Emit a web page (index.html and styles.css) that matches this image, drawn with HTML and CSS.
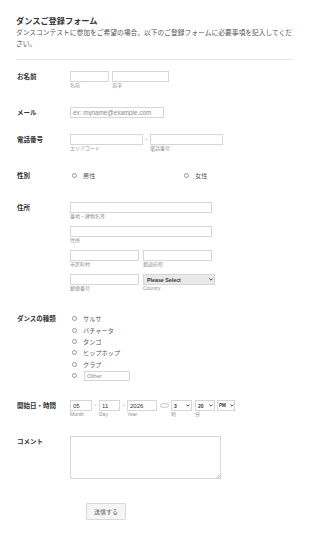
FILE: index.html
```html
<!DOCTYPE html>
<html lang="ja">
<head>
<meta charset="utf-8">
<title>ダンスご登録フォーム</title>
<link rel="stylesheet" href="styles.css">
</head>
<body>
<form class="form">
  <header class="head">
    <h1 class="title">ダンスご登録フォーム</h1>
    <p class="desc">ダンスコンテストに参加をご希望の場合、以下のご登録フォームに必要事項を記入してください。</p>
  </header>

  <div class="row row-name">
    <label class="lbl">お名前</label>
    <div class="field line">
      <div class="col w39"><input class="inp" type="text"><span class="sub">名前</span></div>
      <div class="col w57"><input class="inp" type="text"><span class="sub">苗字</span></div>
    </div>
  </div>

  <div class="row row-mail">
    <label class="lbl">メール</label>
    <div class="field">
      <input class="inp w117" type="text" placeholder="ex: myname@example.com">
    </div>
  </div>

  <div class="row row-phone">
    <label class="lbl">電話番号</label>
    <div class="field line">
      <div class="col w73"><input class="inp" type="text"><span class="sub">エリアコード</span></div>
      <span class="sep w7">-</span>
      <div class="col w73"><input class="inp" type="text"><span class="sub">電話番号</span></div>
    </div>
  </div>

  <div class="row row-gender">
    <label class="lbl">性別</label>
    <div class="gender">
      <div class="gcell"><input class="radio" type="radio" name="g" id="g1"><label class="otext" for="g1">男性</label></div>
      <div class="gcell"><input class="radio" type="radio" name="g" id="g2"><label class="otext" for="g2">女性</label></div>
    </div>
  </div>

  <div class="row row-addr">
    <label class="lbl">住所</label>
    <div class="field addr">
      <div class="col w142"><input class="inp" type="text"><span class="sub">番地・建物名等</span></div>
      <div class="col w142"><input class="inp" type="text"><span class="sub">住所</span></div>
      <div class="line g4">
        <div class="col w69"><input class="inp" type="text"><span class="sub">市区町村</span></div>
        <div class="col w69"><input class="inp" type="text"><span class="sub">都道府県</span></div>
      </div>
      <div class="line g4">
        <div class="col w69"><input class="inp" type="text"><span class="sub">郵便番号</span></div>
        <div class="col w72">
          <span class="selwrap">
            <select class="sel sel-country"><option>Please Select</option></select>
            <svg class="chev" viewBox="0 0 6 4" width="4" height="3"><path d="M0.6 0.6 L3 3 L5.4 0.6" fill="none" stroke="#333" stroke-width="1.3"/></svg>
          </span>
          <span class="sub">Country</span>
        </div>
      </div>
    </div>
  </div>

  <div class="row row-dance">
    <label class="lbl lbl-dance">ダンスの種類</label>
    <div class="field opts">
      <label class="opt"><input class="radio" type="radio" name="d"><span>サルサ</span></label>
      <label class="opt"><input class="radio" type="radio" name="d"><span>バチャータ</span></label>
      <label class="opt"><input class="radio" type="radio" name="d"><span>タンゴ</span></label>
      <label class="opt"><input class="radio" type="radio" name="d"><span>ヒップホップ</span></label>
      <label class="opt"><input class="radio" type="radio" name="d"><span>クラブ</span></label>
      <label class="opt"><input class="radio" type="radio" name="d"><input class="inp other" type="text" placeholder="Other"></label>
    </div>
  </div>

  <div class="row row-date">
    <label class="lbl">開始日・時間</label>
    <div class="field line">
      <div class="col w22"><input class="inp val" type="text" value="05"><span class="sub">Month</span></div>
      <span class="sep w7">-</span>
      <div class="col w21"><input class="inp val" type="text" value="11"><span class="sub">Day</span></div>
      <span class="sep w7">-</span>
      <div class="col w30"><input class="inp val" type="text" value="2026"><span class="sub">Year</span></div>
      <span class="cal">
        <svg viewBox="0 0 9 5" width="9" height="5"><rect x="0.5" y="0.8" width="8" height="3.4" rx="1.7" fill="none" stroke="#bbb" stroke-width="0.9"/></svg>
      </span>
      <div class="col w21">
        <span class="selwrap">
          <select class="sel"><option>3</option></select>
          <svg class="chev" viewBox="0 0 6 4" width="4" height="3"><path d="M0.6 0.6 L3 3 L5.4 0.6" fill="none" stroke="#333" stroke-width="1.3"/></svg>
        </span>
        <span class="sub">時</span>
      </div>
      <span class="sep w3">:</span>
      <div class="col w20">
        <span class="selwrap">
          <select class="sel"><option>20</option></select>
          <svg class="chev" viewBox="0 0 6 4" width="4" height="3"><path d="M0.6 0.6 L3 3 L5.4 0.6" fill="none" stroke="#333" stroke-width="1.3"/></svg>
        </span>
        <span class="sub">分</span>
      </div>
      <div class="col w18 ml2">
        <span class="selwrap">
          <select class="sel sel-ampm"><option>PM</option></select>
          <svg class="chev" viewBox="0 0 6 4" width="4" height="3"><path d="M0.6 0.6 L3 3 L5.4 0.6" fill="none" stroke="#333" stroke-width="1.3"/></svg>
        </span>
      </div>
    </div>
  </div>

  <div class="row row-comment">
    <label class="lbl">コメント</label>
    <div class="field tawrap">
      <textarea class="ta"></textarea>
      <svg class="grip" viewBox="0 0 4 4" width="4" height="4"><path d="M0.5 3.8 L3.8 0.5 M2 3.8 L3.8 2" stroke="#999" stroke-width="0.6"/></svg>
    </div>
  </div>

  <div class="row row-submit">
    <button class="btn" type="button">送信する</button>
  </div>
</form>
</body>
</html>
```

FILE: styles.css
```css
* {
  box-sizing: border-box;
  margin: 0;
  padding: 0;
}

body {
  margin: 0;
  background: #ffffff;
  font-family: "Liberation Sans", "Noto Sans CJK JP", sans-serif;
  color: #555;
}

.form {
  width: 310px;
  padding: 17px 16px 0 16px;
}

.head {
  width: 278px;
  padding-bottom: 10px;
  border-bottom: 1px solid #e9e9e9;
}

.title {
  font-size: 8.2px;
  line-height: 10px;
  font-weight: bold;
  color: #333;
}

.desc {
  font-size: 6.75px;
  line-height: 11px;
  color: #555;
}

.row {
  display: flex;
  align-items: flex-start;
}

.lbl {
  width: 54px;
  flex-shrink: 0;
  padding-left: 1px;
  font-size: 6.5px;
  line-height: 11px;
  font-weight: bold;
  color: #333;
}

.field {
  display: block;
}

.line {
  display: flex;
  align-items: flex-start;
}

.g4 {
  gap: 4px;
}

.row-name { margin-top: 11px; }
.row-name .line { gap: 3px; }
.row-mail { margin-top: 18px; }
.row-phone { margin-top: 16px; }
.row-gender { margin-top: 18px; }
.row-addr { margin-top: 21px; }
.row-dance { margin-top: 21px; }
.row-date { margin-top: 19px; }
.row-comment { margin-top: 18px; }
.row-submit { margin-top: 24px; padding-left: 70px; }

.col {
  display: flex;
  flex-direction: column;
  flex-shrink: 0;
}

.addr {
  display: flex;
  flex-direction: column;
  gap: 6px;
}

.gender {
  display: flex;
  width: 160px;
}

.gcell {
  display: flex;
  align-items: center;
  flex: 0 0 auto;
  width: 112px;
  height: 11px;
}

.gcell + .gcell {
  width: 40px;
}

.otext {
  font-size: 6.2px;
  color: #555;
  white-space: nowrap;
}

.w18 { width: 18px; }
.w20 { width: 20px; }
.w21 { width: 21px; }
.w22 { width: 22px; }
.w30 { width: 30px; }
.w39 { width: 39px; }
.w57 { width: 57px; }
.w69 { width: 69px; }
.w72 { width: 72px; }
.w73 { width: 73px; }
.w117 { width: 117px; }
.w142 { width: 142px; }
.ml2 { margin-left: 2px; }

.inp {
  display: block;
  width: 100%;
  height: 11px;
  border: 1px solid #d6d6d6;
  border-radius: 0;
  background: #fff;
  padding: 0 2px;
  font-family: "Liberation Sans", "Noto Sans CJK JP", sans-serif;
  font-size: 6.3px;
  color: #333;
  outline: none;
}

.inp::placeholder {
  color: #8c8c8c;
}

.inp.val {
  font-size: 6px;
  color: #333;
  padding-left: 2px;
}

.sub {
  display: block;
  font-size: 5px;
  line-height: 7px;
  color: #8f8f8f;
  white-space: nowrap;
}

.sep {
  flex-shrink: 0;
  text-align: center;
  font-size: 6px;
  line-height: 11px;
  color: #777;
}

.w7 { width: 7px; }
.w3 { width: 3px; }

.opt {
  display: flex;
  align-items: center;
  height: 11px;
  font-size: 6.2px;
  color: #555;
}

.radio {
  appearance: none;
  -webkit-appearance: none;
  width: 5px;
  height: 5px;
  margin: 0 6px 0 2px;
  border: 0.7px solid #999;
  border-radius: 50%;
  background: #fff;
  flex-shrink: 0;
}

.opts .opt {
  height: 11.4px;
}

.lbl-dance {
  line-height: 11.4px;
}

.other {
  width: 46px;
  height: 10px;
  margin-left: 1px;
  font-size: 6px;
}

.selwrap {
  position: relative;
  display: block;
  width: 100%;
  height: 11px;
}

.sel {
  appearance: none;
  -webkit-appearance: none;
  display: block;
  width: 100%;
  height: 11px;
  border: 1px solid #d6d6d6;
  border-radius: 0;
  background: #fff;
  padding: 0 0 0 2px;
  font-family: "Liberation Sans", "Noto Sans CJK JP", sans-serif;
  font-size: 5px;
  font-weight: bold;
  color: #333;
  outline: none;
}

.sel-country {
  background: #e9e9e9;
  padding-left: 3px;
  font-size: 5.3px;
}

.sel-ampm {
  padding-left: 1px;
  font-size: 4.6px;
}

.chev {
  position: absolute;
  right: 2px;
  top: 4px;
  pointer-events: none;
}

.sel-ampm + .chev {
  right: 1px;
}

.cal {
  display: flex;
  align-items: center;
  height: 11px;
  margin: 0 2px 0 3px;
}

.tawrap {
  position: relative;
}

.ta {
  display: block;
  width: 151px;
  height: 43px;
  border: 1px solid #d6d6d6;
  border-radius: 0;
  background: #fff;
  resize: none;
  outline: none;
}

.grip {
  position: absolute;
  right: 1px;
  bottom: 1px;
  pointer-events: none;
}

.btn {
  width: 40px;
  height: 17px;
  border: 1px solid #d9d9d9;
  border-radius: 1px;
  background: #f5f5f5;
  font-family: "Liberation Sans", "Noto Sans CJK JP", sans-serif;
  font-size: 6px;
  color: #666;
  cursor: pointer;
}
```
